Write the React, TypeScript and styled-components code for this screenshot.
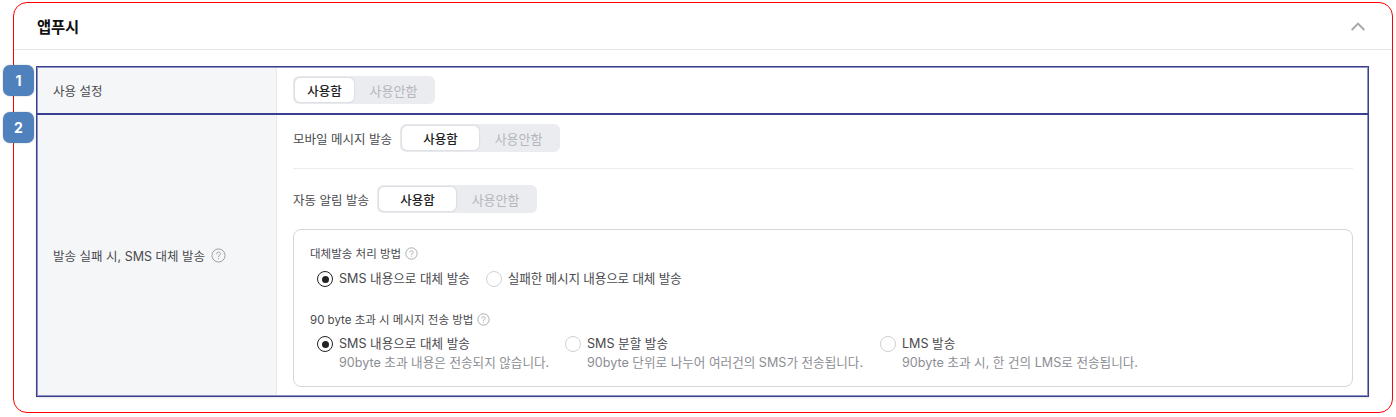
import React from "react";
import styled, { createGlobalStyle } from "styled-components";

const GlobalStyle = createGlobalStyle`
  html, body {
    margin: 0;
    padding: 0;
    background: #fff;
    font-family: Inter, "Noto Sans CJK KR", sans-serif;
    color: #333;
  }
`;

const Page = styled.div`
  width: 1396px;
  height: 417px;
  box-sizing: border-box;
  padding: 2px 3px 4px 13px;
  overflow: hidden;
`;

const Panel = styled.section`
  height: 411px;
  box-sizing: border-box;
  border: 1px solid #ff0000;
  border-radius: 14px;
`;

const Header = styled.header`
  height: 47px;
  box-sizing: border-box;
  display: flex;
  align-items: center;
  justify-content: space-between;
  padding: 0 27px 0 23px;
  border-bottom: 1px solid #e8e8ea;
`;

const Title = styled.h2`
  margin: 0;
  font-size: 15.4px;
  font-weight: 700;
  color: #111;
  letter-spacing: -0.2px;
`;

const Body = styled.div`
  padding: 16px 23px 0 22px;
`;

const Row = styled.div<{ $height: number; $first?: boolean }>`
  position: relative;
  display: grid;
  grid-template-columns: 239px 1fr;
  height: ${(p) => p.$height}px;
  box-sizing: border-box;
  border: 2px solid #9092c2;
  border-top-width: ${(p) => (p.$first ? 2 : 1)}px;
  border-bottom-width: ${(p) => (p.$first ? 1 : 2)}px;
  outline: 1px solid #3b3f8f;
  outline-offset: -1px;
  box-shadow: ${(p) => (p.$first ? "none" : "0 1px 2px rgba(0, 0, 0, 0.1)")};
`;

const Badge = styled.span<{ $top: number }>`
  position: absolute;
  left: -35px;
  top: ${(p) => p.$top}px;
  width: 31px;
  height: 31px;
  border-radius: 7px;
  background: #4f81bd;
  color: #fff;
  font-size: 14px;
  font-weight: 700;
  display: flex;
  align-items: center;
  justify-content: center;
  box-shadow: 0 0 2px rgba(0, 0, 0, 0.25);
`;

const Label = styled.div`
  display: flex;
  align-items: center;
  gap: 6px;
  padding-left: 15px;
  background: #f5f6f8;
  border-right: 1px solid #e8e9ec;
  font-size: 12.5px;
  color: #4a4a4e;
`;

const Content = styled.div<{ $compact?: boolean }>`
  padding: ${(p) => (p.$compact ? "8px 14px 0 16px" : "9px 14px 0 16px")};
`;

const InlineField = styled.div`
  display: flex;
  align-items: center;
  gap: 8px;
  font-size: 12.5px;
  color: #4a4a4e;
`;

const Divider = styled.hr`
  margin: 16px 0 16px;
  border: 0;
  border-top: 1px solid #ececee;
`;

const Toggle = styled.div`
  display: inline-flex;
  height: 28px;
  box-sizing: border-box;
  padding: 2px;
  border-radius: 6px;
  background: #ebecf0;
`;

const ToggleOption = styled.span<{ $active?: boolean; $wide?: boolean }>`
  display: flex;
  align-items: center;
  justify-content: center;
  width: ${(p) => (p.$active ? (p.$wide ? 77 : 59) : 79)}px;
  border-radius: 5px;
  font-size: ${(p) => (p.$active ? 12.5 : 13)}px;
  font-weight: ${(p) => (p.$active ? 500 : 400)};
  color: ${(p) => (p.$active ? "#222" : "#b4b6bc")};
  background: ${(p) => (p.$active ? "#fff" : "transparent")};
  box-shadow: ${(p) => (p.$active ? "0 0 2px rgba(0, 0, 0, 0.2)" : "none")};
`;

const OptionsBox = styled.div`
  margin-top: 16px;
  height: 158px;
  box-sizing: border-box;
  padding: 16px 16px 0;
  border: 1px solid #d5d6d9;
  border-radius: 8px;
`;

const GroupTitle = styled.div`
  display: flex;
  align-items: center;
  gap: 4px;
  height: 14px;
  font-size: 11.5px;
  color: #4a4a4e;
`;

const RadioRow = styled.div<{ $gap: number; $top: number }>`
  display: flex;
  align-items: flex-start;
  gap: ${(p) => p.$gap}px;
  margin: ${(p) => p.$top}px 0 0 7px;
`;

const RadioItem = styled.label<{ $width?: number }>`
  display: flex;
  gap: 6px;
  width: ${(p) => (p.$width ? `${p.$width}px` : "auto")};
`;

const RadioDot = styled.span<{ $checked?: boolean }>`
  flex: none;
  position: relative;
  width: 16px;
  height: 16px;
  box-sizing: border-box;
  border-radius: 50%;
  border: 1px solid ${(p) => (p.$checked ? "#222" : "#d0d1d4")};
  background: #fff;

  &::after {
    content: "";
    display: ${(p) => (p.$checked ? "block" : "none")};
    position: absolute;
    top: 3.5px;
    left: 3.5px;
    width: 7px;
    height: 7px;
    border-radius: 50%;
    background: #222;
  }
`;

const RadioText = styled.span`
  display: flex;
  flex-direction: column;
`;

const RadioLabel = styled.span<{ $tight?: boolean }>`
  font-size: 12.6px;
  line-height: 16px;
  letter-spacing: ${(p) => (p.$tight ? "-0.15px" : "0")};
  color: #4a4a4e;
  white-space: nowrap;
`;

const RadioHint = styled.span`
  font-size: 12.6px;
  line-height: 16px;
  margin-top: 3px;
  color: #8c8e94;
  white-space: nowrap;
`;

const SecondGroup = styled.div`
  margin-top: 25px;
`;

const HelpIcon: React.FC<{ size: number }> = ({ size }) => (
  <svg width={size} height={size} viewBox="0 0 16 16" fill="none" stroke="#9a9ba0" strokeWidth="1">
    <circle cx="8" cy="8" r="7" />
    <path d="M6 6.3C6 5.1 6.9 4.4 8 4.4s2 .7 2 1.8c0 1.5-2 1.6-2 3.2" strokeLinecap="round" />
    <circle cx="8" cy="11.5" r="0.6" fill="#9a9ba0" stroke="none" />
  </svg>
);

const Chevron = () => (
  <svg width="14" height="9" viewBox="0 0 14 9" fill="none" stroke="#a8a8a8" strokeWidth="2">
    <path d="M.7 8L7 1.6 13.3 8" />
  </svg>
);

const UseToggle: React.FC<{ wide?: boolean }> = ({ wide }) => (
  <Toggle>
    <ToggleOption $active $wide={wide}>사용함</ToggleOption>
    <ToggleOption $wide={wide}>사용안함</ToggleOption>
  </Toggle>
);

const App: React.FC = () => (
  <Page>
    <GlobalStyle />
    <Panel>
      <Header>
        <Title>앱푸시</Title>
        <Chevron />
      </Header>
      <Body>
        <Row $height={48} $first>
          <Badge $top={-3}>1</Badge>
          <Label>사용 설정</Label>
          <Content $compact>
            <UseToggle />
          </Content>
        </Row>
        <Row $height={283}>
          <Badge $top={-3}>2</Badge>
          <Label>
            발송 실패 시, SMS 대체 발송 <HelpIcon size={15} />
          </Label>
          <Content>
            <InlineField>
              모바일 메시지 발송 <UseToggle wide />
            </InlineField>
            <Divider />
            <InlineField>
              자동 알림 발송 <UseToggle wide />
            </InlineField>
            <OptionsBox>
              <GroupTitle>
                대체발송 처리 방법 <HelpIcon size={13} />
              </GroupTitle>
              <RadioRow $gap={16} $top={11}>
                <RadioItem>
                  <RadioDot $checked />
                  <RadioLabel>SMS 내용으로 대체 발송</RadioLabel>
                </RadioItem>
                <RadioItem>
                  <RadioDot />
                  <RadioLabel $tight>실패한 메시지 내용으로 대체 발송</RadioLabel>
                </RadioItem>
              </RadioRow>
              <SecondGroup>
                <GroupTitle>
                  90 byte 초과 시 메시지 전송 방법 <HelpIcon size={13} />
                </GroupTitle>
                <RadioRow $gap={0} $top={10}>
                  <RadioItem $width={248}>
                    <RadioDot $checked />
                    <RadioText>
                      <RadioLabel>SMS 내용으로 대체 발송</RadioLabel>
                      <RadioHint>90byte 초과 내용은 전송되지 않습니다.</RadioHint>
                    </RadioText>
                  </RadioItem>
                  <RadioItem $width={315}>
                    <RadioDot />
                    <RadioText>
                      <RadioLabel>SMS 분할 발송</RadioLabel>
                      <RadioHint>90byte 단위로 나누어 여러건의 SMS가 전송됩니다.</RadioHint>
                    </RadioText>
                  </RadioItem>
                  <RadioItem>
                    <RadioDot />
                    <RadioText>
                      <RadioLabel>LMS 발송</RadioLabel>
                      <RadioHint>90byte 초과 시, 한 건의 LMS로 전송됩니다.</RadioHint>
                    </RadioText>
                  </RadioItem>
                </RadioRow>
              </SecondGroup>
            </OptionsBox>
          </Content>
        </Row>
      </Body>
    </Panel>
  </Page>
);

export default App;
